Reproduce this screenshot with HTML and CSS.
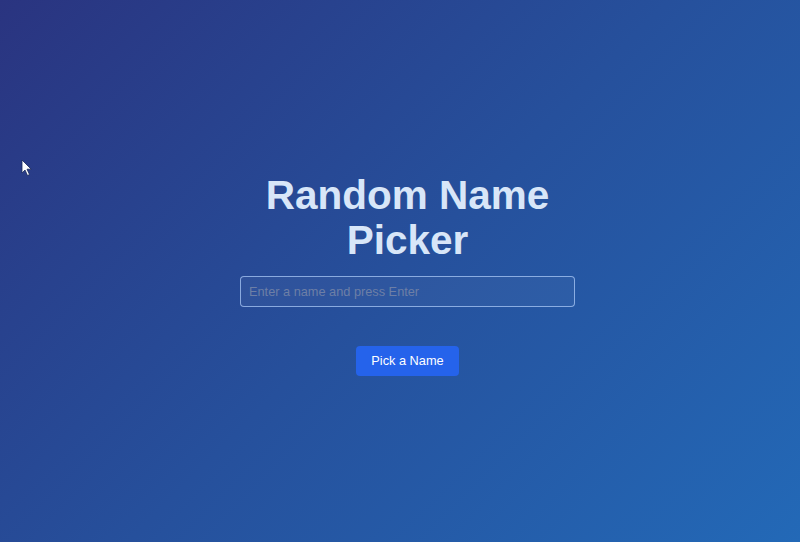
FILE: index.html
```html
<!DOCTYPE html>
<html lang="en">
<head>
<meta charset="utf-8">
<title>Random Name Picker</title>
<link rel="stylesheet" href="styles.css">
</head>
<body>
<main class="picker">
  <h1 class="picker-title">Random Name Picker</h1>
  <input class="picker-input" type="text" placeholder="Enter a name and press Enter">
  <button class="picker-button" type="button">Pick a Name</button>
</main>
<svg class="cursor" width="12" height="18" viewBox="0 0 12 18" aria-hidden="true">
  <path d="M1 1 L1 14 L4 11 L6.5 16.5 L8.5 15.6 L6 10.2 L10.2 10.2 Z" fill="#ffffff" stroke="#1b2a5a" stroke-width="0.8" stroke-linejoin="round"/>
</svg>
</body>
</html>
```
FILE: styles.css
```css
html, body {
  margin: 0;
  height: 100%;
}
body {
  background: linear-gradient(135deg, #2a3480 0%, #26509c 50%, #2369b7 100%);
  font-family: "Liberation Sans", Arial, sans-serif;
  display: flex;
  align-items: center;
  justify-content: center;
  padding-left: 15px;
  box-sizing: border-box;
  position: relative;
  overflow: hidden;
}
.picker {
  width: 335px;
  display: flex;
  flex-direction: column;
  align-items: center;
  margin-top: 6px;
}
.picker-title {
  margin: 0 0 13px;
  font-size: 40.5px;
  line-height: 45px;
  font-weight: 700;
  color: #d8e6f8;
  text-align: center;
}
.picker-input {
  width: 100%;
  height: 31px;
  box-sizing: border-box;
  padding: 0 8px;
  border: 1px solid rgba(170, 200, 245, 0.75);
  border-radius: 4px;
  background: rgba(255, 255, 255, 0.04);
  font-family: "Liberation Sans", Arial, sans-serif;
  font-size: 12.75px;
  color: #e5edf8;
  outline: none;
}
.picker-input::placeholder {
  color: #6d7fa6;
}
.picker-button {
  margin-top: 39px;
  width: 103px;
  height: 30px;
  border: none;
  border-radius: 4px;
  background: #2563eb;
  color: #ffffff;
  font-family: "Liberation Sans", Arial, sans-serif;
  font-size: 12.75px;
  padding: 0;
}
.cursor {
  position: absolute;
  left: 21px;
  top: 159px;
}
```
